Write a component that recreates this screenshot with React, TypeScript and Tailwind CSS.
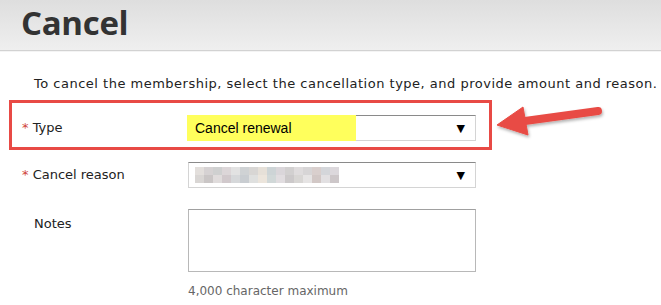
const body = "font-['Verdana','DejaVu_Sans',sans-serif]";

function SelectBox({ highlight, children }: { highlight?: boolean; children?: React.ReactNode }) {
  return (
    <div className="relative flex h-[26px] w-[288px] items-center border border-[#d4d4d4] border-t-[#8a8a8a] bg-white pl-[6px] pr-[10px]">
      {highlight && <div className="absolute -left-[2px] -top-px h-[26px] w-[169px] bg-[#ffff5c]" />}
      <div className="relative flex-1">{children}</div>
      <span className="text-[11px] leading-none text-black">▼</span>
    </div>
  );
}

function Blurred() {
  const cells = ["#e3dfdc", "#d6d2d3", "#cfd0d0", "#dcd6d8", "#e2e2e2", "#cfd2d4", "#d8d6d4", "#e6e0d8", "#cdd4d6", "#dad6da", "#d2d0d0", "#dfdcdd", "#d7d5d6", "#d9cfcd", "#d4d6da", "#dcd8dc"];
  const cells2 = ["#d9d6d4", "#cac6c6", "#e0dcdc", "#d1c9cc", "#d6d8da", "#c9cdd1", "#dfe0df", "#ece5dc", "#d1d8d8", "#e1dde0", "#ccc9ca", "#d8d6d4", "#e6e4e4", "#d2c8c6", "#e2e0e2", "#cdc7c9"];
  return (
    <div className="flex flex-col">
      <div className="flex">{cells.map((c, i) => <div key={i} className="h-[8px] w-[9px]" style={{ background: c }} />)}</div>
      <div className="flex">{cells2.map((c, i) => <div key={i} className="h-[8px] w-[9px]" style={{ background: c }} />)}</div>
    </div>
  );
}

export default function App() {
  return (
    <div className={`relative h-[305px] w-[661px] overflow-hidden bg-white ${body} text-[13px] text-[#222]`}>
      <div className="h-[51px] border-b border-[#d2d2d2] bg-gradient-to-b from-[#dedede] to-[#efefef] pl-[21px] pt-[1px]">
        <h1 className="font-['Open_Sans',sans-serif] text-[33px] font-bold leading-[44px] tracking-[-0.3px] text-[#333]">Cancel</h1>
      </div>
      <div className="h-px bg-[#f4f4f4]" />

      <p className="mt-[23px] pl-[34px] leading-[18px] tracking-[0.5px]">
        To cancel the membership, select the cancellation type, and provide amount and reason.
      </p>

      <div className="relative mt-[22px] pl-[22px]">
        <div className="flex items-center">
          <div className="w-[166px]"><span className="text-[#d0453a]">*</span> Type</div>
          <SelectBox highlight>
            <span className="font-['Liberation_Sans',Arial,sans-serif] text-[14px] text-black">Cancel renewal</span>
          </SelectBox>
        </div>

        <div className="mt-[21px] flex items-center">
          <div className="w-[166px]"><span className="text-[#d0453a]">*</span> Cancel reason</div>
          <SelectBox><Blurred /></SelectBox>
        </div>

        <div className="mt-[21px] flex items-start">
          <div className="w-[166px] pl-[12px] pt-[5px]">Notes</div>
          <div className="flex flex-col">
            <div className="h-[63px] w-[288px] border border-[#b8b8b8] border-t-[#a0a0a0] bg-white" />
            <div className="mt-[10px] text-[12px] text-[#666]">4,000 character maximum</div>
          </div>
        </div>

        <div className="absolute left-[9px] top-[-15px] h-[50px] w-[483px] border-[3px] border-[#e84a45]" />
      </div>

      <svg className="absolute left-[490px] top-[100px]" width="130" height="50" viewBox="0 0 130 50">
        <defs>
          <filter id="sh" x="-20%" y="-40%" width="140%" height="180%">
            <feDropShadow dx="1" dy="2" stdDeviation="1.5" floodColor="#000" floodOpacity="0.3" />
          </filter>
        </defs>
        <g filter="url(#sh)" fill="#e84c45" stroke="#e84c45">
          <line x1="108" y1="11" x2="35" y2="21" strokeWidth="8" strokeLinecap="round" />
          <polygon points="7,25 33,7 38,35" strokeWidth="1" strokeLinejoin="round" />
        </g>
      </svg>
    </div>
  );
}
